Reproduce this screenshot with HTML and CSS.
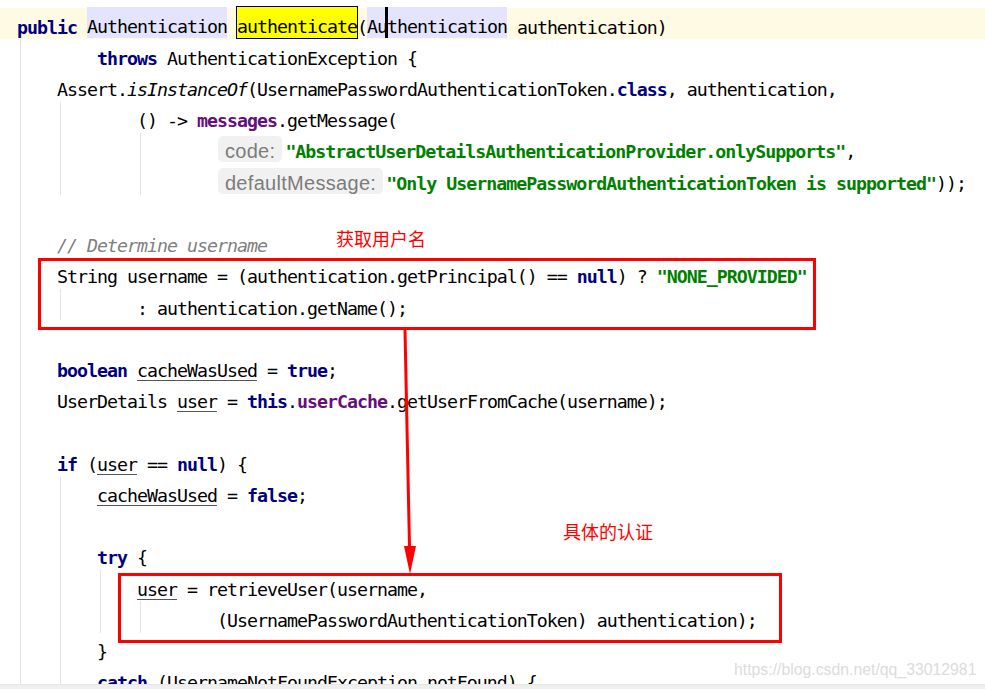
FILE: index.html
```html
<!DOCTYPE html>
<html lang="zh-CN">
<head>
    <meta charset="UTF-8">
    <meta name="viewport" content="width=device-width, initial-scale=1.0">
    <title>AbstractUserDetailsAuthenticationProvider.authenticate</title>
    <link rel="stylesheet" href="styles.css">
</head>
<body>
    <div class="editor">
        <div class="code">
            <div class="line current"><span class="kw">public</span> <span class="usage">Authentication</span> <span class="found">authenticate</span>(<span class="usage">Au<span class="caret"></span>thentication</span> authentication)</div>
            <div class="line g0">        <span class="kw">throws</span> AuthenticationException {</div>
            <div class="line g0">    Assert.<span class="static">isInstanceOf</span>(UsernamePasswordAuthenticationToken.<span class="kw">class</span>, authentication,</div>
            <div class="line g0 g1">            () -&gt; <span class="field">messages</span>.getMessage(</div>
            <div class="line g0 g1 g3">                    <span class="hint">code:</span><span class="str">"AbstractUserDetailsAuthenticationProvider.onlySupports"</span>,</div>
            <div class="line g0 g1 g3">                    <span class="hint">defaultMessage:</span><span class="str">"Only UsernamePasswordAuthenticationToken is supported"</span>));</div>
            <div class="line g0"></div>
            <div class="line g0">    <span class="comment">// Determine username</span></div>
            <div class="line g0">    String username = (authentication.getPrincipal() == <span class="kw">null</span>) ? <span class="str">"NONE_PROVIDED"</span></div>
            <div class="line g0 g1">            : authentication.getName();</div>
            <div class="line g0"></div>
            <div class="line g0">    <span class="kw">boolean</span> <span class="reassigned">cacheWasUsed</span> = <span class="kw">true</span>;</div>
            <div class="line g0">    UserDetails <span class="reassigned">user</span> = <span class="kw">this</span>.<span class="field">userCache</span>.getUserFromCache(username);</div>
            <div class="line g0"></div>
            <div class="line g0">    <span class="kw">if</span> (<span class="reassigned">user</span> == <span class="kw">null</span>) {</div>
            <div class="line g0 g1">        <span class="reassigned">cacheWasUsed</span> = <span class="kw">false</span>;</div>
            <div class="line g0 g1"></div>
            <div class="line g0 g1">        <span class="kw">try</span> {</div>
            <div class="line g0 g1 g2">            <span class="reassigned">user</span> = retrieveUser(username,</div>
            <div class="line g0 g1 g2 g3">                    (UsernamePasswordAuthenticationToken) authentication);</div>
            <div class="line g0 g1">        }</div>
            <div class="line g0 g1">        <span class="kw">catch</span> (UsernameNotFoundException notFound) {</div>
        </div>

        <!-- annotations drawn over the code -->
        <div class="mark mark-name"></div>
        <span class="note note-name">获取用户名</span>
        <svg class="arrow" width="30" height="250" viewBox="0 0 30 250">
            <line x1="10" y1="0" x2="14.6" y2="222" stroke="#ff0000" stroke-width="3"/>
            <polygon points="9,216 21,216 15,244" fill="#ff0000"/>
        </svg>
        <span class="note note-auth">具体的认证</span>
        <div class="mark mark-auth"></div>
        <span class="watermark">https://blog.csdn.net/qq_33012981</span>
    </div>
    <div class="hscroll"></div>
</body>
</html>
```

FILE: styles.css
```css
:root {
    --code-bg: #ffffff;
    --caret-row: #fffae3;
    --usage-bg: #e4e4ff;
    --found-bg: #ffff00;
    --text: #000000;
    --keyword: #000080;
    --string: #008000;
    --field: #660e7a;
    --comment: #808080;
    --guide: #e4e4e4;
    --hint-bg: #f1f1f1;
    --hint-text: #7c7c7c;
    --mark: #ff0000;
    --line-h: 31.24px;
}

html, body {
    margin: 0;
    padding: 0;
}

body {
    width: 985px;
    height: 689px;
    overflow: hidden;
    background: var(--code-bg);
    display: flex;
    flex-direction: column;
}

.editor {
    position: relative;
    flex: 1;
    overflow: hidden;
}

.code {
    padding-top: 8px;
    font-family: "DejaVu Sans Mono", monospace;
    font-size: 18.28px;
    letter-spacing: -1px;
    color: var(--text);
}

.line {
    box-sizing: border-box;
    height: var(--line-h);
    padding: 7.5px 0 0 17px;
    line-height: 23.74px;
    white-space: pre;
    background-image: var(--g0, none), var(--g1, none), var(--g2, none), var(--g3, none);
    background-repeat: no-repeat;
    background-size: 1px 100%;
    background-position: 20px 0, 60px 0, 100px 0, 140px 0;
}

/* indent guides */
.g0 { --g0: linear-gradient(var(--guide), var(--guide)); }
.g1 { --g1: linear-gradient(var(--guide), var(--guide)); }
.g2 { --g2: linear-gradient(var(--guide), var(--guide)); }
.g3 { --g3: linear-gradient(var(--guide), var(--guide)); }

.line.current {
    background: var(--caret-row);
}

.usage {
    background: var(--usage-bg);
    padding: 9.2px 0 0.5px;
}

.found {
    background: var(--found-bg);
    outline: 1px solid #000;
    padding: 9.2px 0 0.5px;
}

.caret {
    border-left: 3px solid #000;
    margin: 0 -1.5px;
    padding: 9.2px 0 0.5px;
}

.kw {
    color: var(--keyword);
    font-weight: bold;
}

.str {
    color: var(--string);
    font-weight: bold;
}

.field {
    color: var(--field);
    font-weight: bold;
}

.static {
    font-style: italic;
}

.comment {
    color: var(--comment);
    font-style: italic;
}

.reassigned {
    text-decoration: underline;
    text-decoration-color: #555;
    text-underline-offset: 3px;
}

.hint {
    display: inline-block;
    margin: -4px 3px -4px 1px;
    padding: 4px 7px 0;
    height: 26px;
    box-sizing: border-box;
    line-height: 22px;
    border-radius: 5px;
    background: var(--hint-bg);
    color: var(--hint-text);
    font-family: "Liberation Sans", Arial, sans-serif;
    font-size: 20px;
    letter-spacing: 0.3px;
    vertical-align: baseline;
}

/* annotations */
.mark {
    position: absolute;
    box-sizing: border-box;
    border: 3px solid var(--mark);
}

.mark-name {
    left: 38px;
    top: 258px;
    width: 778px;
    height: 72px;
}

.mark-auth {
    left: 118px;
    top: 573px;
    width: 664px;
    height: 70px;
}

.note {
    position: absolute;
    color: var(--mark);
    font-family: "Noto Sans CJK SC", sans-serif;
    font-size: 18px;
    line-height: 24px;
}

.note-name {
    left: 336px;
    top: 226px;
}

.note-auth {
    left: 563px;
    top: 519px;
}

.arrow {
    position: absolute;
    left: 395px;
    top: 330px;
}

.watermark {
    position: absolute;
    left: 734px;
    top: 660px;
    font-family: "Liberation Sans", Arial, sans-serif;
    font-size: 15.8px;
    line-height: 20px;
    color: #dcdcdc;
}

.hscroll {
    height: 4px;
    background: #efefef;
    border-top: 1px solid #e6e6e6;
}
```
